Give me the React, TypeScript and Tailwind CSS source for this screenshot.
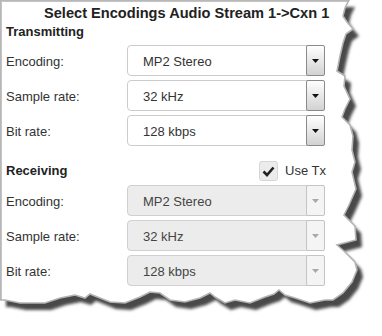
import React from "react";

type SelectProps = {
  value: string;
  disabled?: boolean;
};

const SelectBox = ({ value, disabled }: SelectProps) => {
  return (
    <div
      className={`flex items-stretch w-[198px] h-[31px] rounded-[4px] border ${
        disabled ? "bg-[#ececec] border-[#d0d0d0]" : "bg-white border-[#cccccc]"
      }`}
    >
      <div
        className={`flex-1 flex items-center pl-[15px] pt-[3px] text-[13px] leading-[16px] ${
          disabled ? "text-[#444]" : "text-[#333]"
        }`}
      >
        {value}
      </div>
      {/* BUTTON  */}
      <div
        className={`w-[19px] -my-px -mr-px flex items-center justify-center rounded-[2px] border ${
          disabled
            ? "border-[#c4c4c4] bg-[#f4f4f4]"
            : "border-[#8a8a8a] bg-gradient-to-b from-white to-[#d2d2d2]"
        }`}
      >
        <svg width="7" height="4" viewBox="0 0 7 4">
          <path d="M0 0 H7 L3.5 4 Z" fill={disabled ? "#a8a8a8" : "#111"} />
        </svg>
      </div>
    </div>
  );
};

const Row = ({ label, value, disabled }: { label: string; value: string; disabled?: boolean }) => {
  return (
    <div className="flex items-center">
      <span className="w-[121px] pt-[3px] text-[13px] leading-[16px] text-[#333]">{label}</span>
      <SelectBox value={value} disabled={disabled} />
    </div>
  );
};

const PAPER =
  "M0,0 L349,0 L345,8 L343,16 L347,22 L353,29 L346,34 L343,43 L340,56 L337,71 L345,76 L344,86 L350,99 L345,109 L342,117 L350,125 L353,136 L352,150 L355,162 L352,172 L356,189 L349,205 L344,215 L355,226 L356,240 L337,245 L345,252 L355,262 L357,270 L352,282 L343,293 L333,300 L325,300 L310,303 L295,298 L285,295 L279,290 L274,294 L265,297 L250,303 L235,300 L225,303 L215,297 L210,293 L200,298 L185,302 L170,300 L160,293 L150,292 L140,297 L125,303 L110,302 L100,298 L90,294 L85,298 L75,295 L60,298 L45,303 L20,303 L5,300 L0,300 Z";

const App = () => {
  return (
    <div className="relative w-[382px] h-[336px] overflow-hidden bg-white font-['Liberation_Sans',Arial,sans-serif]">
      {/* PAPER  */}
      <div className="w-[362px] h-[312px] border-l-2 border-t-2 border-[#c4c4c4] pl-[4px] pt-[3px]">
        <div className="pl-[38px] text-[14.6px] leading-[16px] font-bold text-[#222]">
          Select Encodings Audio Stream 1-&gt;Cxn 1
        </div>
        {/* TRANSMITTING  */}
        <div className="mt-[3px] text-[13px] leading-[16px] font-bold text-[#222]">Transmitting</div>
        <div className="mt-[5px] flex flex-col gap-[4px]">
          <Row label="Encoding:" value="MP2 Stereo" />
          <Row label="Sample rate:" value="32 kHz" />
          <Row label="Bit rate:" value="128 kbps" />
        </div>
        {/* RECEIVING  */}
        <div className="mt-[15px] w-[320px] h-[20px] flex items-center justify-between">
          <span className="text-[13px] leading-[16px] font-bold text-[#222]">Receiving</span>
          <div className="flex items-center gap-[7px]">
            <div className="w-[19px] h-[20px] rounded-[3px] border border-[#d6d6d6] bg-[#ececec] flex items-center justify-center">
              <svg width="13" height="11" viewBox="0 0 13 11">
                <path d="M1.5 5.5 L5 9 L11.5 1.5" fill="none" stroke="#222" strokeWidth="2.6" />
              </svg>
            </div>
            <span className="text-[13px] leading-[16px] text-[#333]">Use Tx</span>
          </div>
        </div>
        <div className="mt-[4px] flex flex-col gap-[4px]">
          <Row label="Encoding:" value="MP2 Stereo" disabled />
          <Row label="Sample rate:" value="32 kHz" disabled />
          <Row label="Bit rate:" value="128 kbps" disabled />
        </div>
      </div>
      {/* TORN EDGE  */}
      <svg className="absolute inset-0 pointer-events-none" width="382" height="336" viewBox="0 0 382 336">
        <defs>
          <mask id="outside">
            <rect width="382" height="336" fill="white" />
            <path d={PAPER} fill="black" />
          </mask>
          <filter id="blur" x="-10%" y="-10%" width="120%" height="120%">
            <feGaussianBlur stdDeviation="1.8" />
          </filter>
        </defs>
        <g mask="url(#outside)">
          <rect width="382" height="336" fill="white" />
          <path d={PAPER} transform="translate(6 7)" fill="#4a4a4a" filter="url(#blur)" />
        </g>
        <path d={PAPER} fill="none" stroke="#b4b4b4" strokeWidth="1.6" />
      </svg>
    </div>
  );
};

export default App;
